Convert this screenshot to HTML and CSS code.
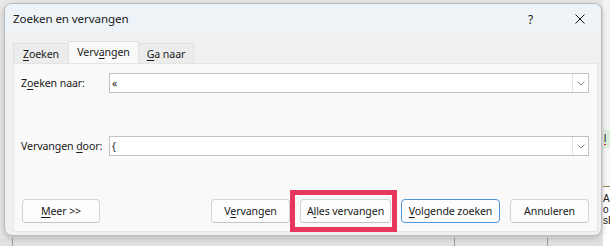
FILE: index.html
```html
<!DOCTYPE html>
<html lang="nl">
<head>
    <meta charset="UTF-8">
    <title>Zoeken en vervangen</title>
    <link rel="stylesheet" href="styles.css">
</head>
<body>
    <div class="screen">
        <div class="desk">
            <div class="dialog">
                <div class="titlebar">
                    <span class="title">Zoeken en vervangen</span>
                    <span class="help">?</span>
                    <svg class="close" width="10" height="10" viewBox="0 0 10 10">
                        <path d="M0.5 0.5 L9.5 9.5 M9.5 0.5 L0.5 9.5" stroke="#1a1a1a" stroke-width="1" fill="none"/>
                    </svg>
                </div>

                <div class="tabs">
                    <div class="tab tab-find"><u>Z</u>oeken</div>
                    <div class="tab active">Verv<u>a</u>ngen</div>
                    <div class="tab tab-goto"><u>G</u>a naar</div>
                </div>

                <div class="panel">
                    <div class="field">
                        <label class="field-label">Z<u>o</u>eken naar:</label>
                        <div class="combo">
                            <span class="combo-value">«</span>
                            <span class="combo-btn">
                                <svg width="8" height="5" viewBox="0 0 8 5"><path d="M0.5 0.5 L4 4 L7.5 0.5" stroke="#8a8a8a" fill="none"/></svg>
                            </span>
                        </div>
                    </div>

                    <div class="field field-second">
                        <label class="field-label">Vervangen <u>d</u>oor:</label>
                        <div class="combo">
                            <span class="combo-value">{</span>
                            <span class="combo-btn">
                                <svg width="8" height="5" viewBox="0 0 8 5"><path d="M0.5 0.5 L4 4 L7.5 0.5" stroke="#8a8a8a" fill="none"/></svg>
                            </span>
                        </div>
                    </div>

                    <div class="buttons">
                        <button class="btn btn-more"><u>M</u>eer &gt;&gt;</button>
                        <div class="spacer"></div>
                        <button class="btn btn-replace">V<u>e</u>rvangen</button>
                        <button class="btn btn-all">A<u>l</u>les vervangen</button>
                        <button class="btn btn-next default"><u>V</u>olgende zoeken</button>
                        <button class="btn btn-cancel">Annuleren</button>
                    </div>
                </div>
            </div>
            <div class="sheet-bottom"></div>
        </div>

        <div class="sheet-right">
            <div class="cell-top"></div>
            <div class="cell-green"><span class="squiggle">l</span></div>
            <div class="cell-blank"></div>
            <div class="cell-text">
                <div>Ar</div>
                <div>o</div>
                <div>sE</div>
            </div>
        </div>

        <div class="highlight"></div>
    </div>
</body>
</html>
```

FILE: styles.css
```css
* {
    margin: 0;
    padding: 0;
    box-sizing: border-box;
}

body {
    font-family: 'Noto Sans', 'Open Sans', sans-serif;
    font-size: 10.6px;
    letter-spacing: -0.1px;
    color: #1a1a1a;
    background: #e6e6e6;
}

u {
    text-decoration: underline;
    text-underline-offset: 2px;
}

.screen {
    position: relative;
    width: 610px;
    height: 246px;
    display: flex;
    overflow: hidden;
}

.desk {
    width: 603px;
    display: flex;
    flex-direction: column;
    background: #e8e8e8;
    padding-top: 3px;
}

.dialog {
    position: relative;
    z-index: 1;
    margin-left: 4px;
    width: 598px;
    height: 233px;
    background: #f0f0f0;
    border: 1px solid #bcbcbc;
    border-radius: 8px;
    box-shadow: 0 2px 6px rgba(0, 0, 0, 0.22);
    overflow: hidden;
    display: flex;
    flex-direction: column;
}

.titlebar {
    height: 30px;
    flex-shrink: 0;
    background: #eef3f8;
    display: flex;
    align-items: center;
    padding-left: 8px;
}

.title {
    font-size: 11.6px;
    flex: 1;
    margin-top: -1px;
}

.help {
    font-size: 12px;
    width: 12px;
    margin-right: 35px;
}

.close {
    margin-right: 16px;
}

.tabs {
    display: flex;
    align-items: flex-end;
    height: 29px;
    padding-left: 8px;
    flex-shrink: 0;
}

.tab {
    height: 20px;
    display: flex;
    align-items: center;
    justify-content: center;
    white-space: nowrap;
    background: #ececec;
    border: 1px solid #e0e0e0;
    border-bottom: none;
    margin-right: -1px;
}

.tab-find {
    width: 56px;
}

.tab.active {
    height: 22px;
    width: 71px;
    background: #f9f9f9;
    position: relative;
    z-index: 1;
    padding-bottom: 2px;
}

.tab-goto {
    width: 56px;
}

.panel {
    margin-left: 8px;
    width: 585px;
    height: 169px;
    background: #f9f9f9;
    border: 1px solid #e4e4e4;
    display: flex;
    flex-direction: column;
    padding: 9px 8px 0 7px;
}

.field {
    display: flex;
    align-items: center;
    height: 20px;
}

.field-second {
    margin-top: 43px;
}

.field-label {
    width: 88px;
    flex-shrink: 0;
    white-space: nowrap;
}

.combo {
    flex: 1;
    height: 20px;
    background: #fff;
    border: 1px solid #c2c2c2;
    display: flex;
    align-items: center;
}

.combo-value {
    flex: 1;
    font-size: 10px;
    padding-left: 2px;
}

.combo-btn {
    width: 16px;
    height: 18px;
    border-left: 1px solid #e2e2e2;
    display: flex;
    align-items: center;
    justify-content: center;
}

.buttons {
    display: flex;
    margin-top: 43px;
    gap: 10px;
}

.btn {
    height: 24px;
    font-family: inherit;
    font-size: 10.6px;
    letter-spacing: -0.1px;
    color: #1a1a1a;
    background: #fdfdfd;
    border: 1px solid #d3d3d3;
    border-bottom-color: #c4c4c4;
    border-radius: 4px;
    white-space: nowrap;
}

.spacer {
    flex: 1;
}

.btn-more {
    width: 78px;
    margin-left: 1px;
}

.btn-replace {
    width: 79px;
}

.btn-all {
    width: 91px;
}

.btn-next {
    width: 99px;
}

.btn.default {
    border: 1px solid #4f97dc;
}

.btn-cancel {
    width: 79px;
}

.sheet-bottom {
    flex: 1;
    margin-top: 2px;
    background-color: #e1e1e1;
    background-image:
        linear-gradient(#9a9a9a, #9a9a9a),
        linear-gradient(#9a9a9a, #9a9a9a),
        linear-gradient(#9a9a9a, #9a9a9a);
    background-size: 1px 100%;
    background-position: 12px 0, 454px 0, 547px 0;
    background-repeat: no-repeat;
}

.sheet-right {
    width: 7px;
    display: flex;
    flex-direction: column;
    background: #fff;
    font-family: 'Liberation Sans', sans-serif;
    font-size: 10px;
    letter-spacing: 0;
    overflow: hidden;
}

.cell-top {
    height: 130px;
    background: #f4f4f4;
}

.cell-green {
    height: 18px;
    background: #dfeedc;
    padding-left: 1px;
    line-height: 18px;
}

.squiggle {
    border-bottom: 1px dashed #d22;
}

.cell-blank {
    height: 39px;
    border-bottom: 1px solid #a08a4e;
    background: #f8f8f8;
}

.cell-text {
    line-height: 11px;
    padding-top: 6px;
    white-space: nowrap;
}

.highlight {
    position: absolute;
    left: 290px;
    top: 190px;
    width: 107px;
    height: 42px;
    border: 5px solid #e8375f;
    z-index: 2;
}
```
